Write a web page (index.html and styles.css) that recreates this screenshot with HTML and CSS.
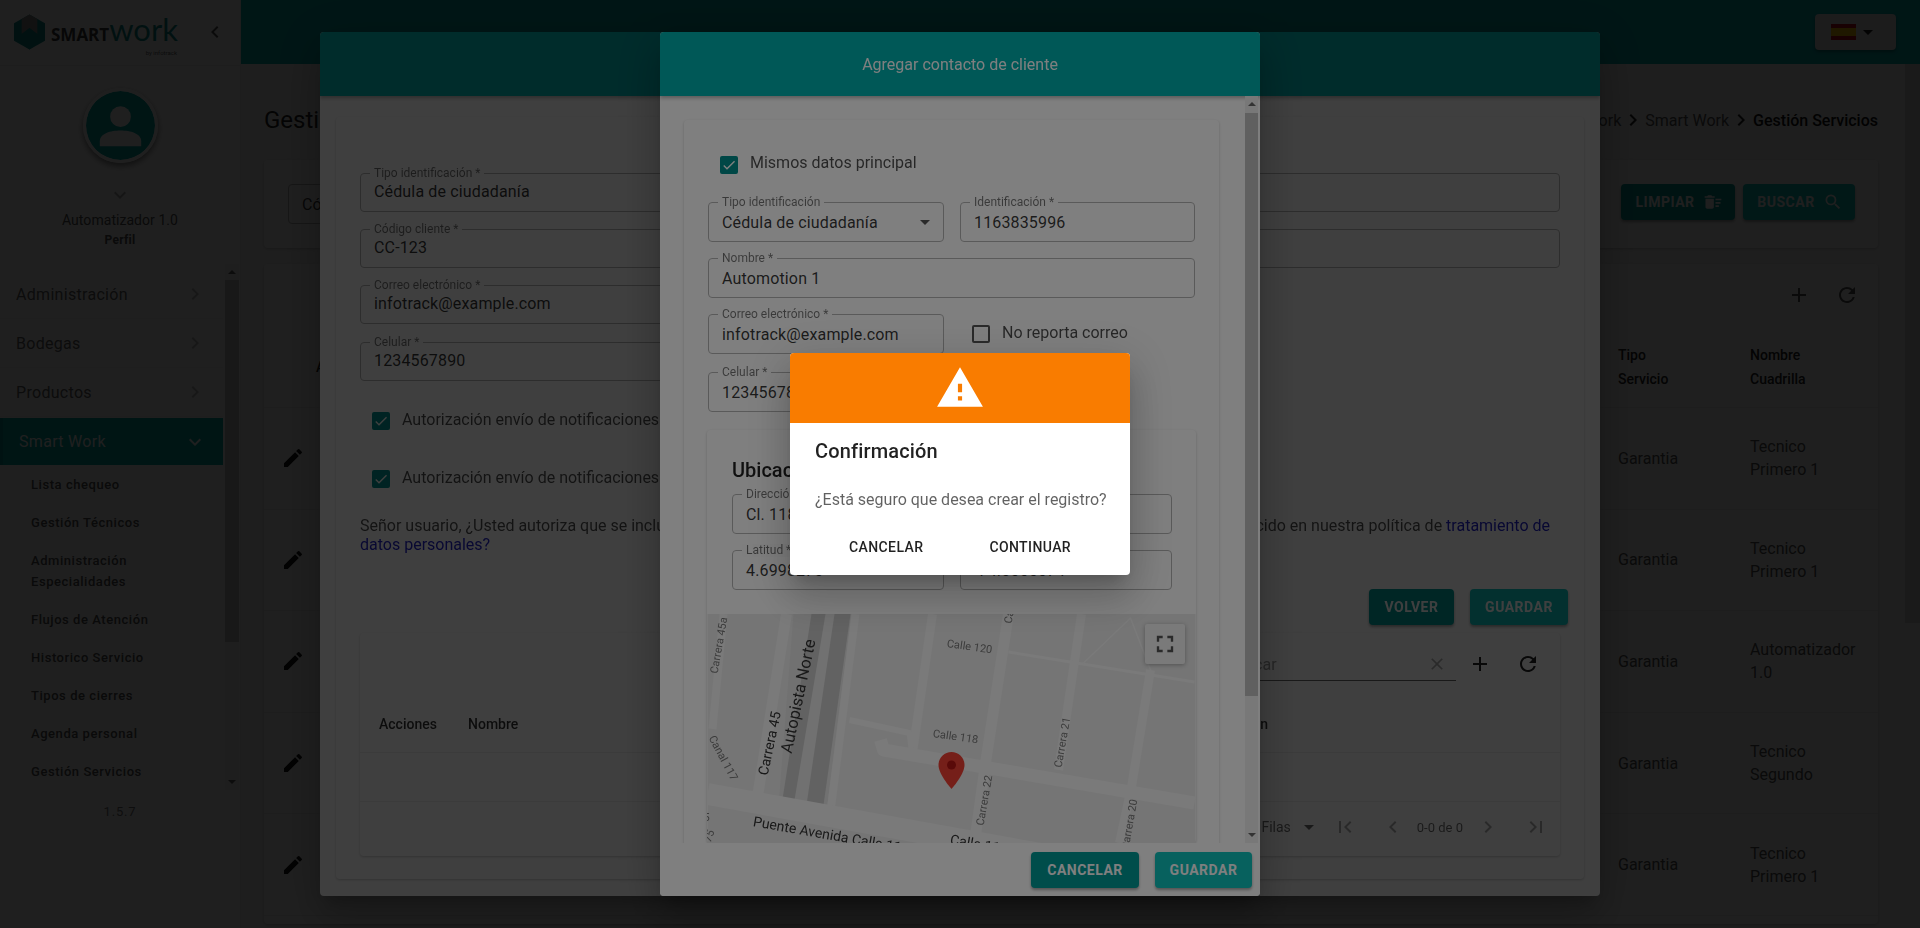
FILE: index.html
```html
<!DOCTYPE html>
<html lang="es">

<head>
    <meta charset="UTF-8">
    <title>Smart Work - Gestión Servicios</title>
    <link rel="stylesheet" href="styles.css">
</head>

<body>
    <svg class="defs" width="0" height="0">
        <symbol id="i-edit" viewBox="0 0 24 24"><path d="M3 17.25V21h3.75L17.81 9.94l-3.75-3.75L3 17.25zM20.71 7.04a.996.996 0 0 0 0-1.41l-2.34-2.34a.996.996 0 0 0-1.41 0l-1.83 1.83 3.75 3.75 1.83-1.83z"/></symbol>
        <symbol id="i-search" viewBox="0 0 24 24"><path d="M15.5 14h-.79l-.28-.27A6.471 6.471 0 0 0 16 9.5 6.5 6.5 0 1 0 9.5 16c1.61 0 3.09-.59 4.23-1.57l.27.28v.79l5 4.99L20.49 19l-4.99-5zm-6 0C7.01 14 5 11.99 5 9.5S7.01 5 9.5 5 14 7.01 14 9.5 11.99 14 9.5 14z"/></symbol>
        <symbol id="i-sweep" viewBox="0 0 24 24"><path d="M15 16h4v2h-4zm0-8h7v2h-7zm0 4h6v2h-6zM3 18c0 1.1.9 2 2 2h6c1.1 0 2-.9 2-2V8H3v10zM14 5h-3l-1-1H6L5 5H2v2h12z"/></symbol>
        <symbol id="i-add" viewBox="0 0 24 24"><path d="M19 13h-6v6h-2v-6H5v-2h6V5h2v6h6v2z"/></symbol>
        <symbol id="i-refresh" viewBox="0 0 24 24"><path d="M17.65 6.35A7.958 7.958 0 0 0 12 4c-4.42 0-7.99 3.58-7.99 8s3.57 8 7.99 8c3.73 0 6.84-2.55 7.73-6h-2.08A5.99 5.99 0 0 1 12 18c-3.31 0-6-2.69-6-6s2.69-6 6-6c1.66 0 3.14.69 4.22 1.78L13 11h7V4l-2.35 2.35z"/></symbol>
        <symbol id="i-left" viewBox="0 0 24 24"><path d="M15.41 7.41 14 6l-6 6 6 6 1.41-1.41L10.83 12z"/></symbol>
        <symbol id="i-right" viewBox="0 0 24 24"><path d="M10 6 8.59 7.41 13.17 12l-4.58 4.59L10 18l6-6z"/></symbol>
        <symbol id="i-down" viewBox="0 0 24 24"><path d="M16.59 8.59 12 13.17 7.41 8.59 6 10l6 6 6-6z"/></symbol>
        <symbol id="i-first" viewBox="0 0 24 24"><path d="M18.41 16.59 13.82 12l4.59-4.59L17 6l-6 6 6 6zM6 6h2v12H6z"/></symbol>
        <symbol id="i-last" viewBox="0 0 24 24"><path d="M5.59 7.41 10.18 12l-4.59 4.59L7 18l6-6-6-6zM16 6h2v12h-2z"/></symbol>
        <symbol id="i-close" viewBox="0 0 24 24"><path d="M19 6.41 17.59 5 12 10.59 6.41 5 5 6.41 10.59 12 5 17.59 6.41 19 12 13.41 17.59 19 19 17.59 13.41 12z"/></symbol>
        <symbol id="i-check" viewBox="0 0 24 24"><path d="M9 16.17 4.83 12l-1.42 1.41L9 19 21 7l-1.41-1.41z"/></symbol>
        <symbol id="i-caret" viewBox="0 0 24 24"><path d="M7 10l5 5 5-5z"/></symbol>
    </svg>

    <div class="app">
        <!-- Sidebar -->
        <aside class="sidebar">
            <div class="brand">
                <svg class="brand-mark" viewBox="0 0 34 36">
                    <path class="hex" d="M17 0 33 9v18l-16 9L1 27V9z"/>
                    <path class="hex-top" d="M17 0 25 4.5V20l-8-6-8 6V4.5z"/>
                    <path class="hex-w" d="M9 20l8-6 8 6v10l-8 6-8-6z"/>
                </svg>
                <div class="brand-name">
                    <span class="brand-smart">SMART</span><span class="brand-work">work</span>
                    <small>by infotrack</small>
                </div>
                <svg class="icon brand-toggle"><use href="#i-left"/></svg>
            </div>

            <div class="profile">
                <svg class="avatar" viewBox="0 0 70 70">
                    <circle class="avatar-bg" cx="35" cy="35" r="35"/>
                    <circle class="avatar-fg" cx="35" cy="26" r="10.5"/>
                    <path class="avatar-fg" d="M14 56v-5c0-8 11-11 21-11s21 3 21 11v5z"/>
                </svg>
                <svg class="icon profile-more"><use href="#i-down"/></svg>
                <div class="profile-name">Automatizador 1.0</div>
                <div class="profile-role">Perfil</div>
            </div>

            <div class="nav-wrap">
                <ul class="nav">
                    <li class="nav-item">Administración <svg class="icon"><use href="#i-right"/></svg></li>
                    <li class="nav-item">Bodegas <svg class="icon"><use href="#i-right"/></svg></li>
                    <li class="nav-item">Productos <svg class="icon"><use href="#i-right"/></svg></li>
                    <li class="nav-item active">Smart Work <svg class="icon"><use href="#i-down"/></svg></li>
                    <li class="nav-sub">Lista chequeo</li>
                    <li class="nav-sub">Gestión Técnicos</li>
                    <li class="nav-sub">Administración<br>Especialidades</li>
                    <li class="nav-sub">Flujos de Atención</li>
                    <li class="nav-sub">Historico Servicio</li>
                    <li class="nav-sub">Tipos de cierres</li>
                    <li class="nav-sub">Agenda personal</li>
                    <li class="nav-sub">Gestión Servicios</li>
                </ul>
                <div class="nav-scroll"><i class="arrow-up"></i><b></b><i class="arrow-down"></i></div>
            </div>
            <div class="version">1.5.7</div>
        </aside>

        <!-- Page behind the dialogs -->
        <div class="page">
            <header class="topbar">
                <div class="lang">
                    <span class="flag"></span>
                    <svg class="icon"><use href="#i-caret"/></svg>
                </div>
            </header>

            <main class="content">
                <div class="title-row">
                    <h1>Gestión Servicios</h1>
                    <nav class="crumbs">
                        Smart Work <svg class="icon"><use href="#i-right"/></svg>
                        Smart Work <svg class="icon"><use href="#i-right"/></svg>
                        <strong>Gestión Servicios</strong>
                    </nav>
                </div>

                <section class="card filter">
                    <div class="field grow"><span class="value">Código</span></div>
                    <button class="btn btn-dark btn-limpiar">LIMPIAR <svg class="icon"><use href="#i-sweep"/></svg></button>
                    <button class="btn btn-teal btn-buscar">BUSCAR <svg class="icon"><use href="#i-search"/></svg></button>
                </section>

                <section class="card services">
                    <div class="services-tools">
                        <svg class="icon"><use href="#i-add"/></svg>
                        <svg class="icon"><use href="#i-refresh"/></svg>
                    </div>
                    <div class="s-row s-head">
                        <span class="s-actions">Acciones</span>
                        <span>Tipo<br>Servicio</span>
                        <span>Nombre<br>Cuadrilla</span>
                    </div>
                    <div class="s-row">
                        <span class="s-actions"><svg class="icon"><use href="#i-edit"/></svg></span>
                        <span>Garantia</span><span>Tecnico<br>Primero 1</span>
                    </div>
                    <div class="s-row">
                        <span class="s-actions"><svg class="icon"><use href="#i-edit"/></svg></span>
                        <span>Garantia</span><span>Tecnico<br>Primero 1</span>
                    </div>
                    <div class="s-row">
                        <span class="s-actions"><svg class="icon"><use href="#i-edit"/></svg></span>
                        <span>Garantia</span><span>Automatizador<br>1.0</span>
                    </div>
                    <div class="s-row">
                        <span class="s-actions"><svg class="icon"><use href="#i-edit"/></svg></span>
                        <span>Garantia</span><span>Tecnico<br>Segundo</span>
                    </div>
                    <div class="s-row">
                        <span class="s-actions"><svg class="icon"><use href="#i-edit"/></svg></span>
                        <span>Garantia</span><span>Tecnico<br>Primero 1</span>
                    </div>
                </section>
            </main>
            <div class="page-scroll"><b></b></div>
        </div>
    </div>

    <!-- First dialog: cliente -->
    <div class="backdrop">
        <div class="modal modal-wide">
            <div class="modal-head"></div>
            <div class="modal-body">
                <section class="card client">
                    <div class="field"><label>Tipo identificación *</label><span class="value">Cédula de ciudadanía</span></div>
                    <div class="field"><label>Código cliente *</label><span class="value">CC-123</span></div>
                    <div class="field half"><label>Correo electrónico *</label><span class="value">infotrack@example.com</span></div>
                    <div class="field half celular"><label>Celular *</label><span class="value">1234567890</span></div>

                    <div class="check check-a"><span class="box on"><svg class="icon"><use href="#i-check"/></svg></span>Autorización envío de notificaciones por correo</div>
                    <div class="check check-b"><span class="box on"><svg class="icon"><use href="#i-check"/></svg></span>Autorización envío de notificaciones por celular</div>

                    <p class="consent">
                        <span>Señor usuario, ¿Usted autoriza que se incluyan sus datos en nuestras bases</span>
                        <span>establecido en nuestra política de <a>tratamiento de</a></span>
                    </p>
                    <p class="consent-end"><a>datos personales?</a></p>

                    <div class="client-actions">
                        <button class="btn btn-dark">VOLVER</button>
                        <button class="btn btn-teal">GUARDAR</button>
                    </div>

                    <div class="card contacts">
                        <div class="contacts-tools">
                            <div class="search">
                                <span>Buscar</span>
                                <svg class="icon"><use href="#i-close"/></svg>
                            </div>
                            <svg class="icon"><use href="#i-add"/></svg>
                            <svg class="icon"><use href="#i-refresh"/></svg>
                        </div>
                        <div class="contacts-head">
                            <span class="col-actions">Acciones</span>
                            <span>Nombre</span>
                            <span class="col-last">Ubicación</span>
                        </div>
                        <div class="contacts-empty"></div>
                        <div class="pager">
                            <span>5 Filas</span>
                            <svg class="icon pager-caret"><use href="#i-caret"/></svg>
                            <svg class="icon off first"><use href="#i-first"/></svg>
                            <svg class="icon off prev"><use href="#i-left"/></svg>
                            <span class="pager-count">0-0 de 0</span>
                            <svg class="icon off next"><use href="#i-right"/></svg>
                            <svg class="icon off last"><use href="#i-last"/></svg>
                        </div>
                    </div>
                </section>
            </div>
        </div>
    </div>

    <!-- Second dialog: contacto -->
    <div class="backdrop">
        <div class="modal modal-form">
            <div class="modal-head">Agregar contacto de cliente</div>
            <div class="modal-scroll">
                <div class="modal-scroll-inner">
                    <section class="card contact">
                        <div class="check check-same"><span class="box on"><svg class="icon"><use href="#i-check"/></svg></span>Mismos datos principal</div>
                        <div class="form-grid">
                            <div class="field"><label>Tipo identificación</label><span class="value">Cédula de ciudadanía</span><svg class="icon select-caret"><use href="#i-caret"/></svg></div>
                            <div class="field"><label>Identificación *</label><span class="value">1163835996</span></div>
                            <div class="field span-2"><label>Nombre *</label><span class="value">Automotion 1</span></div>
                            <div class="field"><label>Correo electrónico *</label><span class="value">infotrack@example.com</span></div>
                            <div class="check check-none"><span class="box"></span>No reporta correo</div>
                            <div class="field celular"><label>Celular *</label><span class="value">1234567890</span></div>
                        </div>

                        <div class="card location">
                            <h3>Ubicación</h3>
                            <div class="form-grid">
                                <div class="field span-2"><label>Dirección *</label><span class="value">Cl. 118 # 22 - 40</span></div>
                                <div class="field"><label>Latitud *</label><span class="value">4.6998270</span></div>
                                <div class="field"><label>Longitud *</label><span class="value">-74.0555574</span></div>
                            </div>
                            <div class="map">
                                <svg class="map-svg" viewBox="0 0 488 229">
                                    <rect class="m-land" width="488" height="229"/>
                                    <path class="m-green" d="M86 0h58l-25 198-48-5z"/>
                                    <path class="m-block" d="M104 0h14l-33 198h-12z"/>
                                    <path class="m-block" d="M127 0h16l-28 198h-17z"/>
                                    <g class="m-road">
                                        <path stroke-width="11" d="M79 0 50 183"/>
                                        <path stroke-width="8" d="M16 0 5 115"/>
                                        <path stroke-width="8" d="M148 0 123 198"/>
                                        <path stroke-width="9" d="M225 0 205 139"/>
                                        <path stroke-width="11" d="M301 0 278 149 267 229"/>
                                        <path stroke-width="9" d="M374 0 351 156"/>
                                        <path stroke-width="9" d="M443 56 424 173 412 229"/>
                                        <path stroke-width="6" d="M142 106 202 119 204 134"/>
                                        <path stroke-width="13" d="M173 126 176 136 487 189"/>
                                        <path stroke-width="22" d="M0 180 355 244"/>
                                        <path stroke-width="3" d="M301 38 487 68"/>
                                        <path stroke-width="1.5" d="M375 50 423 4 443 56"/>
                                    </g>
                                    <g class="m-label">
                                        <text transform="translate(10 60) rotate(-80)">Carrera 45a</text>
                                        <text transform="translate(239 33) rotate(8)">Calle 120</text>
                                        <text transform="translate(225 123) rotate(8)">Calle 118</text>
                                        <text transform="translate(276 212) rotate(-80)">Carrera 22</text>
                                        <text transform="translate(354 154) rotate(-80)">Carrera 21</text>
                                        <text transform="translate(421 236) rotate(-80)">Carrera 20</text>
                                        <text transform="translate(304 10) rotate(-80)">Ca</text>
                                        <text transform="translate(452 -1) rotate(-80)">er.</text>
                                        <text transform="translate(1 124) rotate(62)">Canal 117</text>
                                        <text transform="translate(-4 207)">5</text>
                                        <text transform="translate(3 229) rotate(-70)">75</text>
                                    </g>
                                    <g class="m-label m-label-strong">
                                        <text transform="translate(60 162) rotate(-78)">Carrera 45</text>
                                        <text class="m-label-big" transform="translate(84 140) rotate(-78)">Autopista Norte</text>
                                        <text transform="translate(45 212) rotate(10)">Puente Avenida Calle 116</text>
                                        <text transform="translate(242 230) rotate(10)">Calle 116</text>
                                    </g>
                                    <g transform="translate(231 138)">
                                        <path class="m-pin" d="M13 0C5.8 0 0 5.8 0 13c0 9.5 13 24 13 24s13-14.5 13-24C26 5.8 20.2 0 13 0z"/>
                                        <circle class="m-pin-dot" cx="13" cy="13" r="4.5"/>
                                    </g>
                                </svg>
                                <button class="map-full">
                                    <svg viewBox="0 0 24 24"><path d="M7 14H5v5h5v-2H7v-3zm-2-4h2V7h3V5H5v5zm12 7h-3v2h5v-5h-2v3zM14 5v2h3v3h2V5h-5z"/></svg>
                                </button>
                            </div>
                        </div>
                    </section>
                </div>
                <div class="modal-bar"><i class="arrow-up"></i><b></b><i class="arrow-down"></i></div>
            </div>
            <div class="modal-foot">
                <button class="btn btn-dark">CANCELAR</button>
                <button class="btn btn-teal">GUARDAR</button>
            </div>
        </div>
    </div>

    <!-- Confirmation -->
    <div class="backdrop">
        <div class="confirm">
            <div class="confirm-head">
                <svg viewBox="0 0 24 24"><path d="M1 21h22L12 2 1 21zm12-3h-2v-2h2v2zm0-4h-2v-4h2v4z"/></svg>
            </div>
            <h2>Confirmación</h2>
            <p>¿Está seguro que desea crear el registro?</p>
            <div class="confirm-actions">
                <button class="cancel">CANCELAR</button>
                <button class="go">CONTINUAR</button>
            </div>
        </div>
    </div>
</body>

</html>
```
FILE: styles.css
```css
* {
    box-sizing: border-box;
}

html, body {
    margin: 0;
    height: 100%;
    overflow: hidden;
}

body {
    font-family: Roboto, "Liberation Sans", sans-serif;
    font-size: 16px;
    color: rgba(0, 0, 0, 0.87);
    background-color: #f5f5f5;
}

.defs {
    position: absolute;
}

.icon {
    width: 24px;
    height: 24px;
    fill: currentColor;
    flex: none;
}

button {
    font-family: inherit;
    border: none;
    background: none;
}

.app {
    display: flex;
    height: 928px;
}

/* sidebar */
.sidebar {
    width: 241px;
    flex: none;
    background-color: #fff;
    border-right: 1px solid #eee;
}

.brand {
    height: 66px;
    display: flex;
    align-items: center;
    padding-left: 13px;
    padding-bottom: 1px;
    border-bottom: 1px solid #e8e8e8;
}

.brand-mark {
    width: 33px;
    height: 36px;
}

.hex {
    fill: #0f8f8c;
}

.hex-top {
    fill: #8f8f8f;
}

.hex-w {
    fill: #0f8f8c;
}

.brand-name {
    position: relative;
    margin-left: 5px;
    white-space: nowrap;
    line-height: 24px;
}

.brand-smart {
    font-family: "Open Sans", sans-serif;
    font-weight: 700;
    font-size: 17px;
    color: #3a3a3a;
}

.brand-work {
    font-family: Lato, sans-serif;
    font-size: 31px;
    color: #0f8f8c;
}

.brand-name small {
    position: absolute;
    right: 1px;
    top: 24px;
    font-size: 6px;
    color: #666;
}

.brand-toggle {
    margin-left: 25px;
    color: #555;
}

.profile {
    display: flex;
    flex-direction: column;
    align-items: center;
    padding-top: 22px;
}

.avatar {
    width: 75px;
    height: 75px;
    border: 3px solid #fff;
    border-radius: 50%;
    box-shadow: 0 3px 6px rgba(0, 0, 0, 0.5);
}

.avatar-bg {
    fill: #00a9a6;
}

.avatar-fg {
    fill: #fff;
}

.profile-more {
    margin-top: 20px;
    color: #aaa;
}

.profile-name {
    margin-top: 3px;
    font-size: 14px;
    line-height: 20px;
    letter-spacing: 0.05px;
    color: #555;
}

.profile-role {
    font-size: 12px;
    line-height: 20px;
    font-weight: 700;
    letter-spacing: 0.3px;
    color: #555;
}

.nav-wrap {
    display: flex;
    margin-top: 14px;
    height: 526px;
}

.nav {
    list-style: none;
    margin: 0;
    padding: 6px 0 0;
    width: 223px;
    flex: none;
}

.nav-item {
    height: 49px;
    display: flex;
    align-items: center;
    justify-content: space-between;
    padding: 0 16px;
    letter-spacing: 0.3px;
    color: #666;
    border-bottom: 1px solid #f2f2f2;
}

.nav-item .icon {
    color: #bbb;
}

.nav-item.active {
    height: 47px;
    margin-top: 1px;
    padding-left: 16px;
    color: #fff;
    background-color: #00a9a6;
    border-left: 3px solid #009190;
    border-bottom: none;
}

.nav-item.active .icon {
    color: #fff;
}

.nav-sub {
    padding: 8.5px 0 8.5px 31px;
    font-size: 13px;
    line-height: 21px;
    font-weight: 500;
    letter-spacing: 0.55px;
    color: #555;
}

.nav-scroll,
.modal-bar {
    position: relative;
    background-color: #f1f1f1;
}

.nav-scroll {
    width: 14px;
    margin-left: 2px;
}

.nav-scroll b {
    display: block;
    height: 362px;
    margin-top: 16px;
    background-color: #c1c1c1;
}

.arrow-up,
.arrow-down {
    position: absolute;
    left: 50%;
    margin-left: -4px;
    border-left: 4px solid transparent;
    border-right: 4px solid transparent;
}

.arrow-up {
    top: 6px;
    border-bottom: 4px solid #666;
}

.arrow-down {
    bottom: 6px;
    border-top: 4px solid #666;
}

.version {
    margin-top: 14px;
    text-align: center;
    font-size: 13px;
    letter-spacing: 0.8px;
    color: #777;
}

/* page */
.page {
    flex: 1;
    position: relative;
    overflow: hidden;
}

.topbar {
    height: 64px;
    background-color: #00b0ae;
    display: flex;
    justify-content: flex-end;
    align-items: center;
    padding: 0 24px 0 0;
}

.lang {
    width: 81px;
    height: 36px;
    display: flex;
    align-items: center;
    padding-left: 16px;
    border-radius: 4px;
    background-color: #e0e0e0;
    box-shadow: 0 2px 3px rgba(0, 0, 0, 0.3);
}

.flag {
    width: 25px;
    height: 16px;
    background: linear-gradient(#c60b1e 25%, #ffc400 25%, #ffc400 75%, #c60b1e 75%);
}

.content {
    padding: 40px 42px 0 23px;
}

.title-row {
    display: flex;
    justify-content: space-between;
    align-items: center;
    height: 32px;
}

.title-row h1 {
    margin: 0;
    font-size: 24px;
    font-weight: 400;
}

.crumbs {
    display: flex;
    align-items: center;
    color: #555;
}

.crumbs strong {
    font-weight: 500;
    color: #111;
}

.crumbs .icon {
    color: #222;
}

.card {
    background-color: #fff;
    border-radius: 4px;
    box-shadow: 0 1px 3px rgba(0, 0, 0, 0.22);
}

.filter {
    margin-top: 24px;
    height: 88px;
    padding: 24px 23px 0 24px;
    display: flex;
    align-items: flex-start;
    gap: 8px;
}

.grow {
    flex: 1;
    margin-right: 40px;
}

.btn {
    display: inline-flex;
    align-items: center;
    justify-content: center;
    height: 36px;
    padding: 0 16px;
    border-radius: 4px;
    font-size: 14px;
    font-weight: 700;
    letter-spacing: 0.5px;
    color: #fff;
    box-shadow: 0 2px 3px rgba(0, 0, 0, 0.35);
}

.btn-dark {
    background-color: #009a97;
}

.btn-teal {
    background-color: #0fc2bd;
}

.btn-limpiar {
    width: 114px;
    gap: 8px;
    padding: 0 0 0 2px;
}

.btn-buscar {
    width: 112px;
    gap: 8px;
    padding: 0 0 0 2px;
}

.btn .icon {
    width: 20px;
    height: 20px;
}

.services {
    margin-top: 16px;
    height: 660px;
}

.services-tools {
    height: 62px;
    display: flex;
    justify-content: flex-end;
    align-items: center;
    gap: 24px;
    padding: 0 19px 0 0;
    color: #555;
}

.s-row {
    display: grid;
    grid-template-columns: 1354px 132px 1fr;
    align-items: center;
    height: 101.6px;
    line-height: 23px;
    border-bottom: 1px solid #eee;
    color: #555;
}

.s-head {
    height: 82px;
    font-size: 14px;
    font-weight: 500;
    line-height: 24px;
    color: #222;
}

.s-actions {
    padding-left: 17px;
}

.s-head .s-actions {
    padding-left: 52px;
}

.s-actions .icon {
    display: block;
    color: #111;
}

.page-scroll {
    position: absolute;
    right: 0;
    top: 64px;
    bottom: 0;
    width: 15px;
    background-color: #f1f1f1;
}

.page-scroll b {
    display: block;
    height: 559px;
    background-color: #d4d4d4;
}

/* dialogs */
.backdrop {
    position: fixed;
    inset: 0;
    display: flex;
    align-items: center;
    justify-content: center;
    background-color: rgba(0, 0, 0, 0.5);
}

.modal {
    height: 864px;
    background-color: #fff;
    border-radius: 4px;
    overflow: hidden;
    box-shadow: 0 11px 15px -7px rgba(0, 0, 0, 0.2), 0 24px 38px 3px rgba(0, 0, 0, 0.14), 0 9px 46px 8px rgba(0, 0, 0, 0.12);
}

.modal-wide {
    width: 1280px;
}

.modal-form {
    width: 600px;
    display: flex;
    flex-direction: column;
}

.modal-head {
    height: 64px;
    flex: none;
    display: flex;
    align-items: center;
    justify-content: center;
    background-color: #00b0ae;
    color: #fff;
    box-shadow: 0 2px 4px rgba(0, 0, 0, 0.3);
    position: relative;
}

.modal-body {
    padding: 21px 16px;
}

/* outlined inputs */
.field {
    position: relative;
    height: 40px;
    display: flex;
    align-items: center;
    padding: 0 13px;
    border: 1px solid #b5b5b5;
    border-radius: 4px;
    background-color: #fff;
}

.field label {
    position: absolute;
    left: 9px;
    top: -7px;
    padding: 0 4px;
    font-size: 12px;
    line-height: 13px;
    color: rgba(0, 0, 0, 0.55);
    background-color: #fff;
    white-space: nowrap;
}

.value {
    white-space: nowrap;
    letter-spacing: 0.15px;
    color: rgba(0, 0, 0, 0.8);
}

.select-caret {
    position: absolute;
    right: 6px;
    top: 7px;
    color: #555;
}

.box {
    width: 18px;
    height: 18px;
    flex: none;
    border: 2px solid #555;
    border-radius: 2px;
    display: flex;
    align-items: center;
    justify-content: center;
}

.box.on {
    background-color: #008f8c;
    border-color: #008f8c;
    color: #fff;
}

.box .icon {
    width: 16px;
    height: 16px;
}

.check {
    display: flex;
    align-items: flex-start;
    gap: 12px;
    height: 18px;
    line-height: 14px;
    white-space: nowrap;
    color: rgba(0, 0, 0, 0.7);
}

/* client form */
.client {
    height: 762px;
    padding: 56px 24px 0;
}

.client > .field {
    height: 39px;
    margin-bottom: 17px;
}

.client > .field .value {
    margin-top: -2px;
}

.half {
    width: 600px;
}

.client > .field:nth-child(3) {
    margin-bottom: 0;
}

.client > .celular {
    margin: 18px 0 0;
}

.check-a {
    margin: 31px 0 0 12px;
    line-height: 16px;
}

.check-b {
    margin: 40px 0 0 12px;
    line-height: 16px;
}

.consent {
    margin: 28px 0 0;
    display: flex;
    justify-content: space-between;
    padding-right: 10px;
    line-height: 19px;
    color: rgba(0, 0, 0, 0.7);
}

.consent-end {
    margin: 0;
    line-height: 19px;
}

a {
    color: #2323c8;
}

.client-actions {
    margin: 35px -8px 0 0;
    display: flex;
    justify-content: flex-end;
    gap: 16px;
}

.client-actions .btn-dark {
    width: 85px;
}

.client-actions .btn-teal {
    width: 98px;
}

.contacts {
    margin-top: 8px;
    height: 223px;
}

.contacts-tools {
    height: 62px;
    display: flex;
    justify-content: flex-end;
    align-items: center;
    gap: 24px;
    padding-right: 20px;
}

.search {
    width: 235px;
    height: 32px;
    margin-right: -12px;
    margin-top: 1px;
    display: flex;
    align-items: center;
    justify-content: space-between;
    border-bottom: 1px solid #666;
    color: #999;
    padding: 0 9px 0 6px;
}

.search .icon {
    width: 20px;
    height: 20px;
    color: #aaa;
}

.contacts-head {
    height: 58px;
    display: flex;
    align-items: center;
    padding-left: 19px;
    font-size: 14px;
    font-weight: 500;
    border-bottom: 1px solid #eee;
    color: rgba(0, 0, 0, 0.8);
}

.col-actions {
    width: 89px;
}

.col-last {
    margin: 0 292px 0 auto;
}

.contacts-empty {
    height: 49px;
    border-bottom: 1px solid #eee;
}

.pager {
    height: 54px;
    display: flex;
    align-items: center;
    justify-content: flex-end;
    padding: 0 12px 4px 0;
    font-size: 14px;
    color: rgba(0, 0, 0, 0.6);
}

.pager-caret {
    margin: 0 0 0 6px;
}

.off {
    color: rgba(0, 0, 0, 0.35);
}

.first {
    margin-left: 12px;
}

.prev {
    margin-left: 24px;
}

.pager-count {
    margin: 0 13px 0 12px;
    font-size: 13px;
}

.last {
    margin-left: 24px;
}

/* contact form */
.modal-scroll {
    flex: 1;
    display: flex;
    min-height: 0;
}

.modal-scroll-inner {
    width: 585px;
    overflow: hidden;
    padding: 24px 26px 0 24px;
}

.modal-bar {
    width: 13px;
}

.modal-bar b {
    display: block;
    height: 583px;
    margin-top: 17px;
    background-color: #c1c1c1;
}

.contact {
    padding: 36px 24px 0 24px;
    height: 760px;
}

.check-same {
    margin-left: 12px;
    margin-bottom: 28px;
}

.form-grid {
    display: grid;
    grid-template-columns: 236px 1fr;
    gap: 16px;
}

.span-2 {
    grid-column: span 2;
}

.check-none {
    margin: 11px 0 0 12px;
    line-height: 16px;
}

.contact .celular {
    margin-top: 2px;
}

.location {
    margin: 18px -1px 0 -1px;
    padding-top: 28px;
}

.location h3 {
    margin: 0 0 12px 25px;
    font-size: 20px;
    line-height: 24px;
    font-weight: 500;
}

.location .form-grid {
    grid-template-columns: 212px 1fr;
    margin: 0 24px 24px 25px;
}

.map {
    position: relative;
    height: 229px;
    overflow: hidden;
}

.map-svg {
    display: block;
    width: 100%;
    height: 229px;
}

.m-land { fill: #eaeaea; }
.m-green { fill: #e2e2e2; }
.m-block { fill: #c4c4c4; }
.m-road path { fill: none; stroke: #f4f4f4; stroke-linecap: butt; stroke-linejoin: round; }
.m-label text { font-size: 11px; fill: #777; }
.m-label-strong text { font-size: 14px; fill: #333; }
.m-label-strong .m-label-big { font-size: 16.5px; }
.m-pin { fill: #ea3f33; }
.m-pin-dot { fill: #b31412; }

.map-full {
    position: absolute;
    right: 11px;
    top: 10px;
    width: 40px;
    height: 40px;
    padding: 6px;
    background-color: #f4f4f4;
    border-radius: 2px;
    box-shadow: 0 1px 4px rgba(0, 0, 0, 0.3);
}

.map-full svg {
    display: block;
    fill: #555;
}

.modal-foot {
    height: 53px;
    flex: none;
    display: flex;
    justify-content: flex-end;
    align-items: flex-start;
    gap: 16px;
    padding: 9px 8px 0 0;
    background-color: #fff;
}

.modal-foot .btn-dark {
    width: 108px;
}

.modal-foot .btn-teal {
    width: 97px;
}

/* confirmation */
.confirm {
    width: 340px;
    height: 222px;
    background-color: #fff;
    border-radius: 4px;
    overflow: hidden;
    box-shadow: 0 11px 15px -7px rgba(0, 0, 0, 0.2), 0 24px 38px 3px rgba(0, 0, 0, 0.14), 0 9px 46px 8px rgba(0, 0, 0, 0.12);
}

.confirm-head {
    height: 70px;
    display: flex;
    align-items: center;
    justify-content: center;
    background-color: #f97c00;
}

.confirm-head svg {
    width: 50px;
    height: 50px;
    fill: #fff;
}

.confirm h2 {
    margin: 14px 0 0 25px;
    font-size: 20px;
    line-height: 28px;
    font-weight: 500;
    letter-spacing: 0.15px;
}

.confirm p {
    margin: 23px 0 0 25px;
    line-height: 24px;
    white-space: nowrap;
    color: rgba(0, 0, 0, 0.62);
}

.confirm-actions {
    display: flex;
    margin-top: 23px;
}

.confirm-actions button {
    font-size: 14px;
    font-weight: 500;
    letter-spacing: 0.4px;
    line-height: 24px;
    padding: 0;
    color: rgba(0, 0, 0, 0.87);
}

.cancel {
    margin-left: 59px;
}

.go {
    margin-left: 66px;
}
```
